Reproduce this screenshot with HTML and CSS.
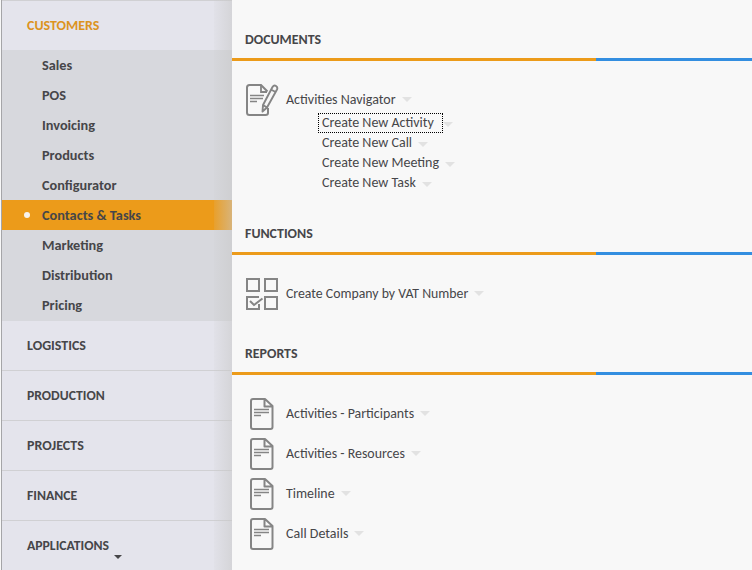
FILE: index.html
```html
<!DOCTYPE html>
<html lang="en">
<head>
<meta charset="utf-8">
<title>Contacts &amp; Tasks</title>
<link rel="stylesheet" href="styles.css">
</head>
<body>
<svg class="defs" width="0" height="0" aria-hidden="true">
  <symbol id="doc" viewBox="0 0 24 32">
    <path d="M3 1H15L22.500 8V29Q22.500 31 20.500 31H3Q1 31 1 29V3Q1 1 3 1Z M14.500 1V8.500H22" fill="none" stroke="#858585" stroke-width="2" stroke-linejoin="round"/>
    <path d="M4 11.500H19M4 14.500H19M4 17.500H11" fill="none" stroke="#858585" stroke-width="1.500"/>
  </symbol>
</svg>
<div class="app">
  <nav class="sidebar">
    <a class="group active">CUSTOMERS</a>
    <div class="sub">
      <a class="item">Sales</a>
      <a class="item">POS</a>
      <a class="item">Invoicing</a>
      <a class="item">Products</a>
      <a class="item">Configurator</a>
      <a class="item selected"><i class="dot"></i>Contacts &amp; Tasks</a>
      <a class="item">Marketing</a>
      <a class="item">Distribution</a>
      <a class="item">Pricing</a>
    </div>
    <a class="group">LOGISTICS</a>
    <a class="group narrow">PRODUCTION</a>
    <a class="group">PROJECTS</a>
    <a class="group narrow">FINANCE</a>
    <a class="group narrow last">APPLICATIONS<i class="more"></i></a>
  </nav>
  <main class="content">
    <section class="documents">
      <h2>DOCUMENTS</h2>
      <div class="rule"></div>
      <div class="row first">
        <span class="icon"><svg width="33" height="33" viewBox="0 0 33 33"><path d="M22 24V29Q22 31 19.500 31H3.500Q1 31 1 28.500V3.500Q1 1 3.500 1H15L21.500 7.500" fill="none" stroke="#858585" stroke-width="2"/><path d="M15 1V8H21" fill="none" stroke="#858585" stroke-width="1.800"/><path d="M4 11.500H18M4 14.500H17M4 17.500H11" stroke="#858585" stroke-width="1.500"/><path d="M17 21L26.500 3Q28 .7 30 2T31 5.500L21 23.500L16.500 27.500Z M25 5.500L29.500 8 M17 21L21 23.500" fill="#f8f8f8" stroke="#858585" stroke-width="1.900" stroke-linejoin="round"/></svg></span>
        <span class="label">Activities Navigator</span><i class="arrow"></i>
      </div>
      <div class="links">
        <div class="link"><span class="label focus">Create New Activity</span><i class="arrow"></i></div>
        <div class="link"><span class="label">Create New Call</span><i class="arrow"></i></div>
        <div class="link"><span class="label">Create New Meeting</span><i class="arrow"></i></div>
        <div class="link"><span class="label">Create New Task</span><i class="arrow"></i></div>
      </div>
    </section>
    <section class="functions">
      <h2>FUNCTIONS</h2>
      <div class="rule"></div>
      <div class="row">
        <span class="icon"><svg width="33" height="32" viewBox="0 0 33 32"><path d="M1 1H13V13H1ZM19 1H31V13H19ZM19 19H31V31H19ZM13 19H1V31H13V26" fill="none" stroke="#858585" stroke-width="2"/><path d="M4 23L8 27L16.500 20.500" fill="none" stroke="#858585" stroke-width="2"/></svg></span>
        <span class="label tight">Create Company by VAT Number</span><i class="arrow"></i>
      </div>
    </section>
    <section class="reports">
      <h2>REPORTS</h2>
      <div class="rule"></div>
      <div class="row"><span class="icon doc"><svg width="24" height="32"><use href="#doc"/></svg></span><span class="label report">Activities - Participants</span><i class="arrow"></i></div>
      <div class="row"><span class="icon doc"><svg width="24" height="32"><use href="#doc"/></svg></span><span class="label report">Activities - Resources</span><i class="arrow"></i></div>
      <div class="row"><span class="icon doc"><svg width="24" height="32"><use href="#doc"/></svg></span><span class="label report">Timeline</span><i class="arrow"></i></div>
      <div class="row"><span class="icon doc"><svg width="24" height="32"><use href="#doc"/></svg></span><span class="label">Call Details</span><i class="arrow"></i></div>
    </section>
  </main>
</div>
</body>
</html>
```
FILE: styles.css
```css
* { box-sizing: border-box; }
body {
  margin: 0;
  overflow: hidden;
  background: #f8f8f8;
  color: #464649;
  font: 14px/20px Carlito, Calibri, Lato, sans-serif;
}
.defs { position: absolute; }
.app { display: flex; height: 570px; }
.sidebar {
  position: relative;
  flex: none;
  width: 232px;
  border-left: 1px solid #f8f8f8;
  box-shadow: inset 1px 0 #a5a5a8;
  padding-left: 1px;
  background: #e4e4ec;
  font-weight: 700;
  overflow: hidden;
}
.sidebar::after {
  content: "";
  position: absolute;
  inset: 0 0 0 auto;
  width: 18px;
  background: linear-gradient(90deg, rgba(200, 200, 200, .1), rgba(200, 200, 200, .55));
}
.group {
  display: flex;
  align-items: center;
  height: 50px;
  padding-left: 25px;
  border-bottom: 1px solid #d0d0d3;
}
.group.active { border-bottom: 0; border-top: 1px solid #d0d0d3; color: #dc931f; }
.group.last { border-bottom: 0; position: relative; }
.group.narrow { font-size: 13.7px; }
.sub { height: 271px; background: #d7d8dd; }
.item {
  display: flex;
  align-items: center;
  height: 30px;
  padding-left: 40px;
  position: relative;
  font-size: 14.3px;
}
.item.selected { background: #ec9b1a; }
.dot {
  position: absolute;
  left: 22px;
  top: 12px;
  width: 6px;
  height: 6px;
  border-radius: 50%;
  background: #f7f3ee;
}
.more {
  position: absolute;
  left: 112px;
  top: 34px;
  border: 4px solid transparent;
  border-top-color: #464649;
  border-bottom: 0;
}
.content { flex: 1; }
section { display: flow-root; }
.documents { height: 194px; }
.functions { height: 120px; }
h2 { margin: 30px 0 8px 13px; font: inherit; font-size: 13.9px; font-weight: 700; }
.rule { height: 3px; background: linear-gradient(90deg, #ec9b1a 364px, #338ee0 364px); margin-bottom: 19px; }
.row { display: flex; align-items: center; height: 40px; padding-left: 14px; }
.icon { width: 40px; height: 32px; flex: none; }
.icon.doc { padding-left: 4px; }
.icon svg { display: block; }
.label { white-space: nowrap; }
.label.tight { font-size: 13.8px; }
.label.report { font-size: 13.9px; }
.arrow {
  margin: -1px 0 0 6px;
  border: 5px solid transparent;
  border-top-color: #e2e2e2;
  border-bottom: 0;
}
.links { margin: -7px 0 0 86px; }
.link { display: flex; align-items: center; height: 20px; padding-left: 4px; }
.link .arrow { margin-top: 3px; }
.link .focus { outline: 1px dotted #000; outline-offset: -1px; width: 125px; height: 20px; margin-left: -4px; padding-left: 4px; }
.focus + .arrow { margin-left: 0; }
```
